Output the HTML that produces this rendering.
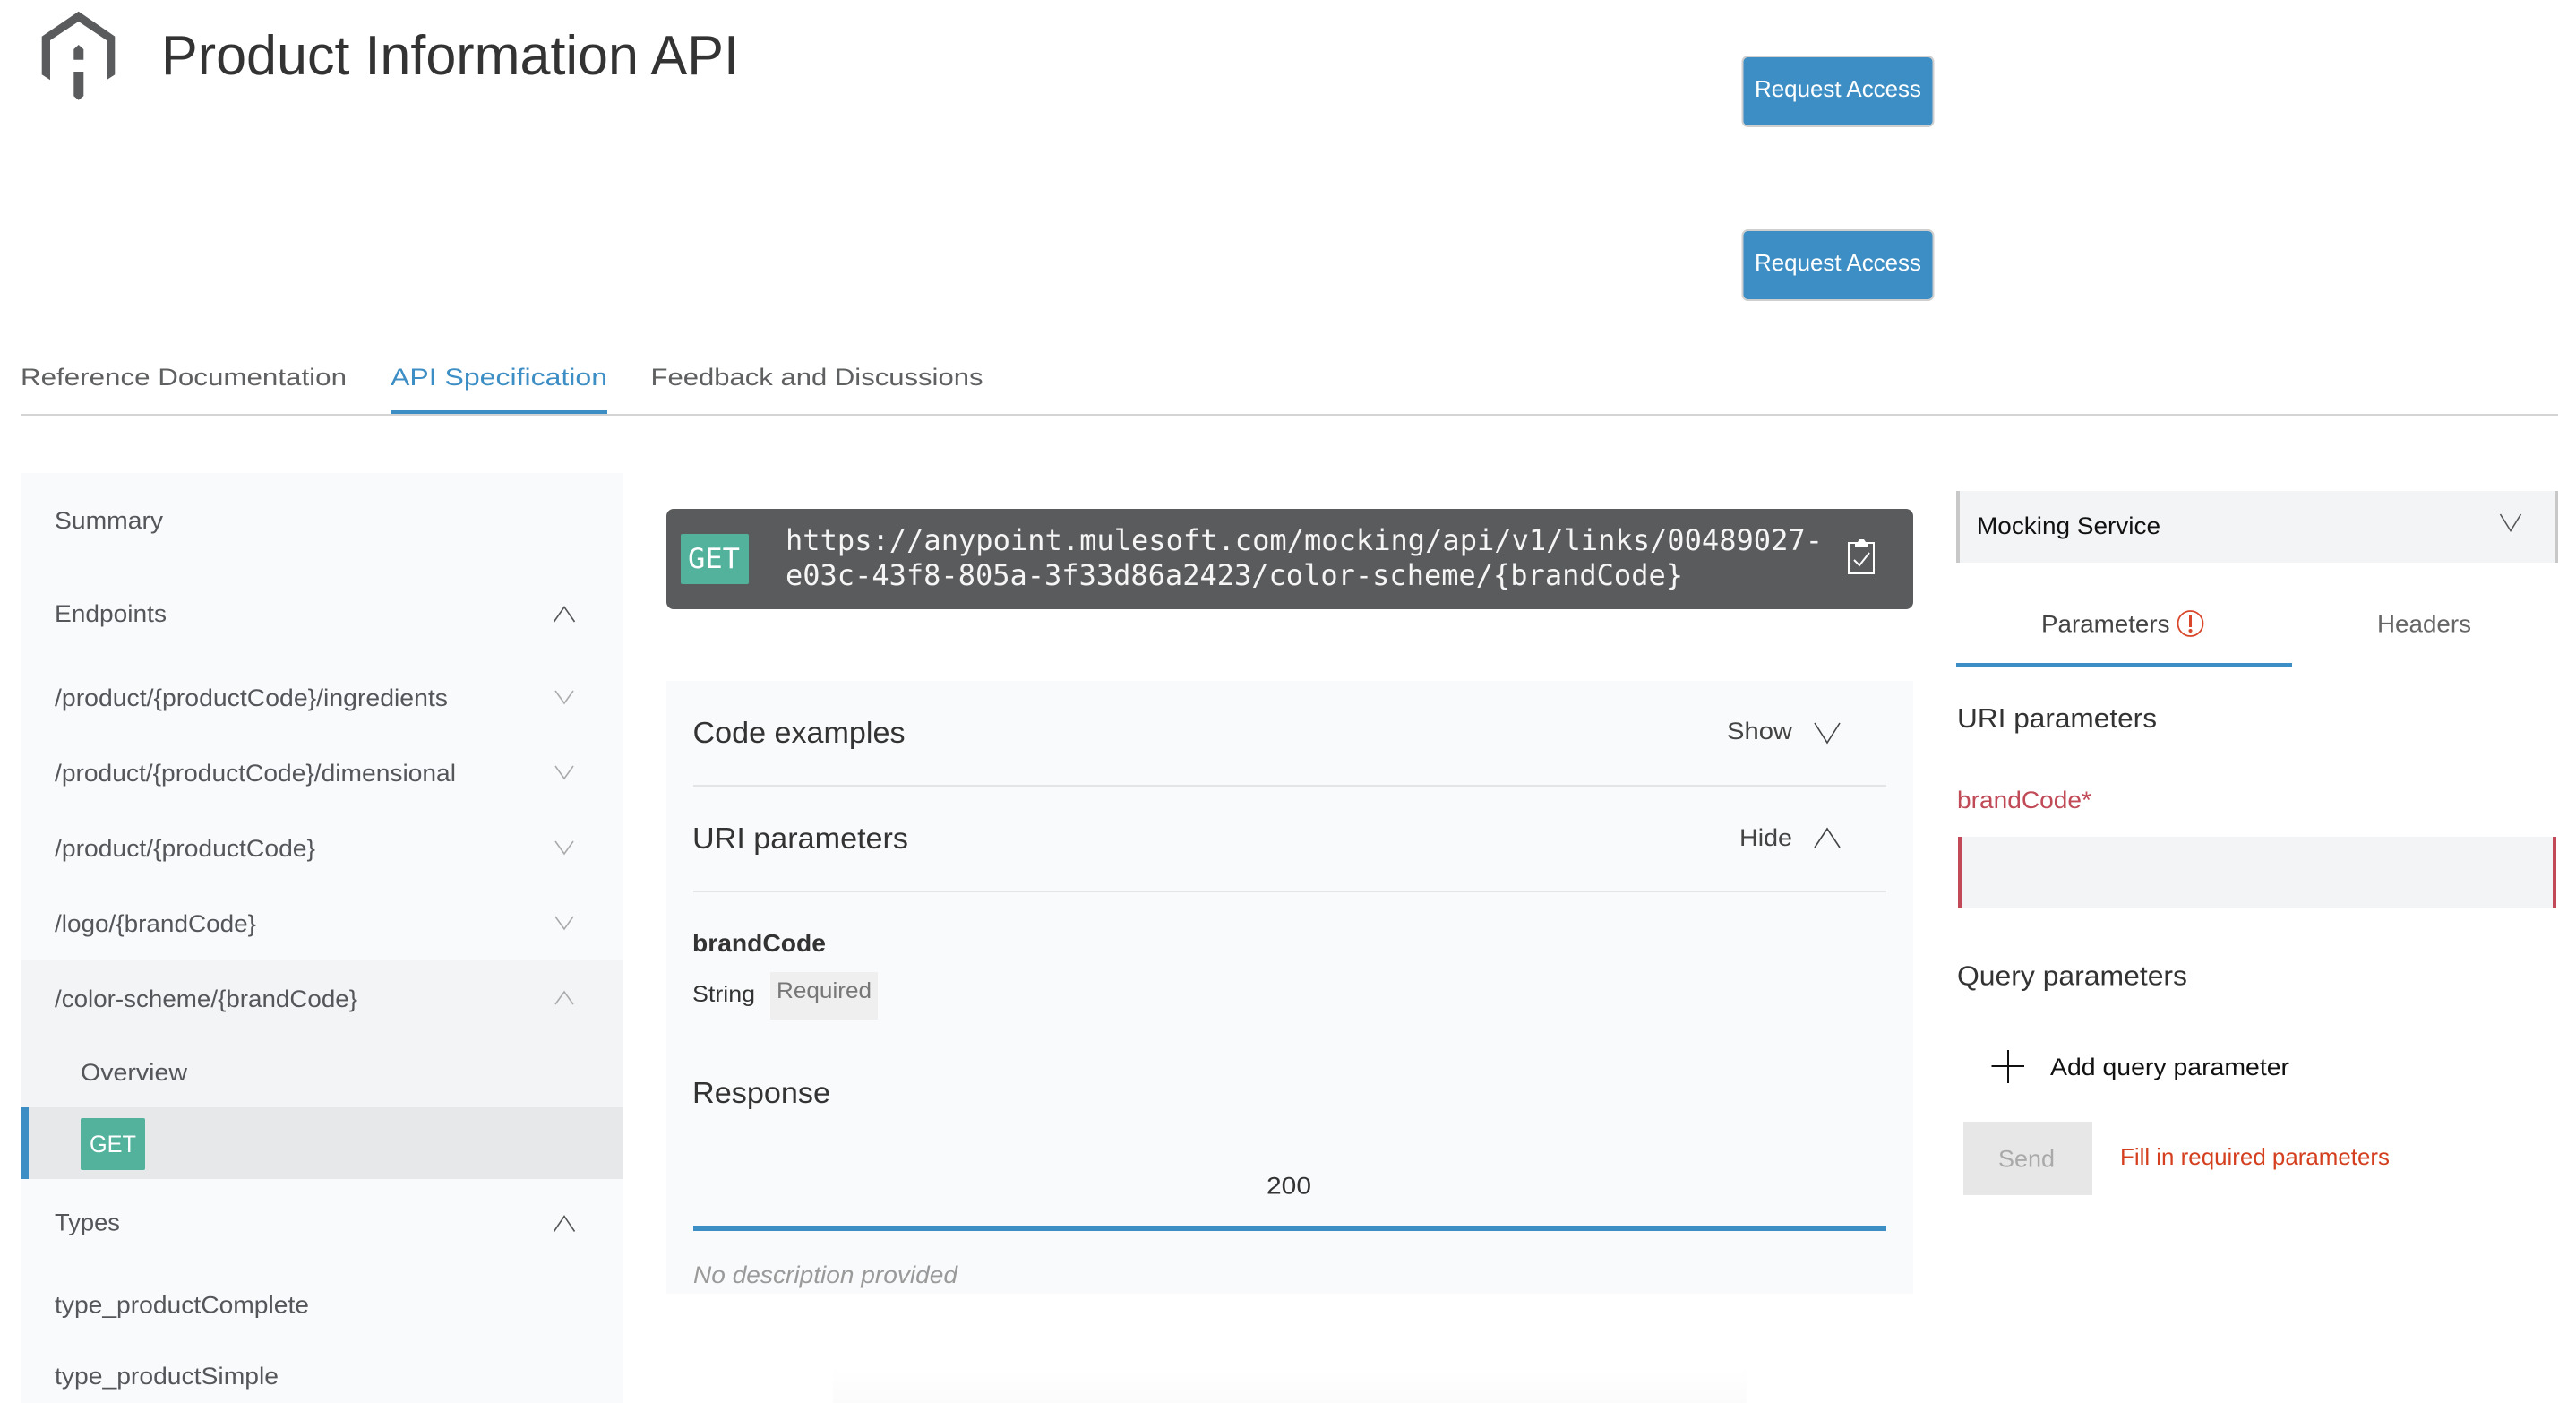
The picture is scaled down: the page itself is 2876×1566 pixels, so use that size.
<!DOCTYPE html>
<html lang="en">
<head>
<meta charset="utf-8">
<title>Product Information API</title>
<style>
html,body{margin:0;padding:0;background:#fff;width:2876px;height:1566px;overflow:hidden}
svg{display:block}
text{font-family:"Liberation Sans",sans-serif;white-space:pre}
.m{font-family:"DejaVu Sans Mono","Liberation Mono",monospace}
.n{font-size:27px;fill:#55565a}
.c{fill:none;stroke-width:1.6}
</style>
</head>
<body>
<svg xmlns="http://www.w3.org/2000/svg" width="2876" height="1566" viewBox="0 0 2876 1566">
<defs>
<linearGradient id="fade" x1="0" y1="0" x2="0" y2="1"><stop offset="0" stop-color="#ffffff"/><stop offset="1" stop-color="#fbfbfb"/></linearGradient>
</defs>
<rect width="2876" height="1566" fill="#fff"/>

<!-- logo -->
<g fill="#5a5b5d">
<path d="M87.7 12.7L128.3 40.7V83.3L119 89.3V45L87.7 24L56 45V89.3L46.7 83.3V40.7Z"/>
<path d="M82.3 55L87.7 50L93.3 55V66.7H82.3Z"/>
<path d="M82.3 80H93.3V107.3L87.7 111.7L82.3 107.3Z"/>
</g>
<text x="180" y="83" font-size="62" fill="#333" textLength="645" lengthAdjust="spacingAndGlyphs">Product Information API</text>

<!-- buttons -->
<rect x="1945.5" y="63" width="213" height="78" rx="6" fill="#3d8ec4" stroke="#cfcfcf" stroke-width="2"/>
<text x="1959" y="108" font-size="26" fill="#fff" textLength="186" lengthAdjust="spacingAndGlyphs">Request Access</text>
<rect x="1945.5" y="257" width="213" height="78" rx="6" fill="#3d8ec4" stroke="#cfcfcf" stroke-width="2"/>
<text x="1959" y="302" font-size="26" fill="#fff" textLength="186" lengthAdjust="spacingAndGlyphs">Request Access</text>

<!-- tabs -->
<text x="23" y="430" font-size="27" fill="#5f6062" textLength="364" lengthAdjust="spacingAndGlyphs">Reference Documentation</text>
<text x="436" y="430" font-size="27" fill="#3d8ec4" textLength="242" lengthAdjust="spacingAndGlyphs">API Specification</text>
<text x="726.5" y="430" font-size="27" fill="#5f6062" textLength="371" lengthAdjust="spacingAndGlyphs">Feedback and Discussions</text>
<rect x="24" y="462" width="2832" height="2" fill="#d4d4d4"/>
<rect x="436" y="458" width="242" height="4" fill="#3d8ec4"/>

<!-- sidebar -->
<rect x="24" y="528" width="672" height="1038" fill="#f9fafc"/>
<rect x="24" y="1072" width="672" height="164" fill="#f3f4f6"/>
<rect x="24" y="1236" width="672" height="80" fill="#e7e8ea"/>
<rect x="24" y="1236" width="8" height="80" fill="#3d8ec4"/>

<text class="n" x="61" y="590" textLength="121" lengthAdjust="spacingAndGlyphs">Summary</text>
<text class="n" x="61" y="694" textLength="125" lengthAdjust="spacingAndGlyphs">Endpoints</text>
<path class="c" stroke="#555" d="M618.5 694L630 677.5L641.5 694"/>
<text class="n" x="61" y="788" textLength="439" lengthAdjust="spacingAndGlyphs">/product/{productCode}/ingredients</text>
<path class="c" stroke="#aaa" d="M620 771L630 785L640 771"/>
<text class="n" x="61" y="872" textLength="448" lengthAdjust="spacingAndGlyphs">/product/{productCode}/dimensional</text>
<path class="c" stroke="#aaa" d="M620 855L630 869L640 855"/>
<text class="n" x="61" y="956" textLength="291" lengthAdjust="spacingAndGlyphs">/product/{productCode}</text>
<path class="c" stroke="#aaa" d="M620 939L630 953L640 939"/>
<text class="n" x="61" y="1040" textLength="225" lengthAdjust="spacingAndGlyphs">/logo/{brandCode}</text>
<path class="c" stroke="#aaa" d="M620 1023L630 1037L640 1023"/>
<text class="n" x="61" y="1124" textLength="338" lengthAdjust="spacingAndGlyphs">/color-scheme/{brandCode}</text>
<path class="c" stroke="#aaa" d="M620 1121L630 1107L640 1121"/>
<text class="n" x="90" y="1206" textLength="119" lengthAdjust="spacingAndGlyphs">Overview</text>
<rect x="90" y="1248" width="72" height="58" rx="2" fill="#52b29c"/>
<text x="100" y="1286" font-size="27" fill="#fff" textLength="52" lengthAdjust="spacingAndGlyphs">GET</text>
<text class="n" x="61" y="1373.5" textLength="73" lengthAdjust="spacingAndGlyphs">Types</text>
<path class="c" stroke="#555" d="M618.5 1374.5L630 1357.5L641.5 1374.5"/>
<text class="n" x="61" y="1465.5" textLength="284" lengthAdjust="spacingAndGlyphs">type_productComplete</text>
<text class="n" x="61" y="1545" textLength="250" lengthAdjust="spacingAndGlyphs">type_productSimple</text>

<!-- url bar -->
<rect x="744" y="568" width="1392" height="112" rx="8" fill="#5a5b5d"/>
<rect x="760" y="596" width="76" height="56" rx="2" fill="#52b29c"/>
<text class="m" x="768" y="634" font-size="31" fill="#fff" textLength="58" lengthAdjust="spacingAndGlyphs">GET</text>
<text class="m" x="877" y="614" font-size="32" fill="#f5f5f5" textLength="1158" lengthAdjust="spacingAndGlyphs">https://anypoint.mulesoft.com/mocking/api/v1/links/00489027-</text>
<text class="m" x="877" y="653" font-size="32" fill="#f5f5f5" textLength="1002" lengthAdjust="spacingAndGlyphs">e03c-43f8-805a-3f33d86a2423/color-scheme/{brandCode}</text>
<!-- clipboard -->
<path fill="none" stroke="#fff" stroke-width="2" d="M2064 606H2092V640H2064Z"/>
<path fill="#fff" d="M2071 605H2074L2076 602H2081L2083 605H2086V611H2071Z"/>
<path fill="none" stroke="#fff" stroke-width="2" d="M2070 625L2076 631L2087 617"/>

<!-- main panel -->
<rect x="744" y="760" width="1392" height="684" fill="#f9fafc"/>
<text x="773.5" y="829" font-size="33" fill="#333" textLength="237" lengthAdjust="spacingAndGlyphs">Code examples</text>
<text x="1928" y="825" font-size="27" fill="#444" textLength="73" lengthAdjust="spacingAndGlyphs">Show</text>
<path class="c" stroke="#444" stroke-width="2" d="M2026 807L2040 829L2054 807"/>
<rect x="774" y="876" width="1332" height="2" fill="#e3e4e8"/>
<text x="773" y="947" font-size="33" fill="#333" textLength="241" lengthAdjust="spacingAndGlyphs">URI parameters</text>
<text x="1942" y="944" font-size="27" fill="#444" textLength="59" lengthAdjust="spacingAndGlyphs">Hide</text>
<path class="c" stroke="#444" stroke-width="2" d="M2026 946L2040 925L2054 946"/>
<rect x="774" y="994" width="1332" height="2" fill="#e3e4e8"/>
<text x="773" y="1062" font-size="28" font-weight="700" fill="#333" textLength="149" lengthAdjust="spacingAndGlyphs">brandCode</text>
<text x="773" y="1118" font-size="25" fill="#333" textLength="70" lengthAdjust="spacingAndGlyphs">String</text>
<rect x="860" y="1085" width="120" height="53" fill="#efefef"/>
<text x="867" y="1114" font-size="25" fill="#777" textLength="106" lengthAdjust="spacingAndGlyphs">Required</text>
<text x="773" y="1231" font-size="33" fill="#333" textLength="154" lengthAdjust="spacingAndGlyphs">Response</text>
<text x="1414" y="1332.5" font-size="27" fill="#333" textLength="50" lengthAdjust="spacingAndGlyphs">200</text>
<rect x="774" y="1368" width="1332" height="6" fill="#3d8ec4"/>
<text x="774" y="1432" font-size="27" font-style="italic" fill="#9a9a9a" textLength="295" lengthAdjust="spacingAndGlyphs">No description provided</text>
<rect x="930" y="1528" width="1020" height="38" fill="url(#fade)"/>

<!-- right column -->
<rect x="2184" y="548" width="672" height="80" fill="#f3f4f6"/>
<rect x="2184" y="548" width="4" height="80" fill="#c8c8c8"/>
<rect x="2852" y="548" width="4" height="80" fill="#c8c8c8"/>
<text x="2207" y="596" font-size="27" fill="#111" textLength="205" lengthAdjust="spacingAndGlyphs">Mocking Service</text>
<path class="c" stroke="#555" stroke-width="2" d="M2791.5 574L2803 592.5L2814.5 574"/>

<text x="2279" y="705.5" font-size="27" fill="#444" textLength="143.5" lengthAdjust="spacingAndGlyphs">Parameters</text>
<circle cx="2445.5" cy="696" r="14" fill="none" stroke="#d9472b" stroke-width="1.8"/>
<rect x="2444" y="686" width="3" height="14" fill="#d9472b"/>
<circle cx="2445.5" cy="704" r="2" fill="#d9472b"/>
<text x="2654" y="705.5" font-size="27" fill="#666" textLength="105" lengthAdjust="spacingAndGlyphs">Headers</text>
<rect x="2184" y="740" width="375" height="4" fill="#3d8ec4"/>

<text x="2185" y="812" font-size="31" fill="#333" textLength="223" lengthAdjust="spacingAndGlyphs">URI parameters</text>
<text x="2185" y="902" font-size="27" fill="#c14a57" textLength="150" lengthAdjust="spacingAndGlyphs">brandCode*</text>
<rect x="2186" y="934" width="668" height="80" fill="#f3f4f6"/>
<rect x="2186" y="934" width="4" height="80" fill="#c24a58"/>
<rect x="2850" y="934" width="4" height="80" fill="#c24a58"/>

<text x="2185" y="1099.5" font-size="31" fill="#333" textLength="257" lengthAdjust="spacingAndGlyphs">Query parameters</text>
<path fill="none" stroke="#111" stroke-width="2" d="M2223.5 1190H2260M2242 1172V1209"/>
<text x="2289" y="1200" font-size="27" fill="#111" textLength="267" lengthAdjust="spacingAndGlyphs">Add query parameter</text>
<rect x="2192" y="1252" width="144" height="82" fill="#e7e7e7"/>
<text x="2231" y="1302.5" font-size="27" fill="#aaa" textLength="63" lengthAdjust="spacingAndGlyphs">Send</text>
<text x="2367" y="1300" font-size="26" fill="#d4401f" textLength="301" lengthAdjust="spacingAndGlyphs">Fill in required parameters</text>
</svg>
</body>
</html>
